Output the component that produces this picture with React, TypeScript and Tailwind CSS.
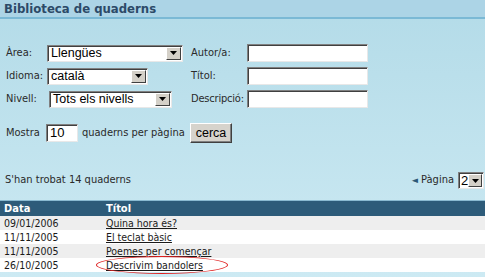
import React from 'react';

const font = { fontFamily: '"DejaVu Sans Condensed", "DejaVu Sans", Verdana, sans-serif' };

function Arrow() {
  return (
    <div className="w-[15px] h-full bg-[#d4d0c8] border border-t-[#ffffff] border-l-[#ffffff] border-r-[#404040] border-b-[#404040] flex items-center justify-center">
      <svg width="7" height="4" viewBox="0 0 7 4">
        <path d="M0 0h7L3.5 4z" fill="#000" />
      </svg>
    </div>
  );
}

function Select({ value, w }: { value: string; w: string }) {
  return (
    <div
      className={`${w} h-[17px] bg-white flex items-stretch border border-t-[#808080] border-l-[#808080] border-r-[#e8e8e8] border-b-[#e8e8e8] shadow-[inset_1px_1px_0_#404040] p-[1px] pl-[3px]`}
    >
      <span className="flex-1 text-[12.5px] leading-[13px] text-black font-['Liberation_Sans',Arial,sans-serif]">{value}</span>
      <Arrow />
    </div>
  );
}

function Input({ w, value }: { w: string; value?: string }) {
  return (
    <div className={`${w} h-[18px] bg-white border border-t-[#808080] border-l-[#808080] border-r-[#e8e8e8] border-b-[#e8e8e8] shadow-[inset_1px_1px_0_#404040] pl-[3px] text-[13px] leading-[15px] text-black font-['Liberation_Sans',Arial,sans-serif]`}>
      {value}
    </div>
  );
}

const rows = [
  { date: '09/01/2006', title: 'Quina hora és?' },
  { date: '11/11/2005', title: 'El teclat bàsic' },
  { date: '11/11/2005', title: 'Poemes per començar' },
  { date: '26/10/2005', title: 'Descrivim bandolers' },
];

export default function App() {
  return (
    <div className="w-[485px] h-[277px] overflow-hidden bg-gradient-to-b from-[#b3dbe8] to-[#cdeaf3] text-[11px] text-[#2a2a2a]" style={font}>
      <div className="h-[19px] bg-[#acd4e6] border-b-2 border-[#7bb9d5] pl-[4px] flex items-center">
        <h1 className="text-[13px] font-bold text-[#2c4a68] leading-none">Biblioteca de quaderns</h1>
      </div>

      <div className="pt-[25px] pl-[6px] flex flex-col gap-[5px]">
        <div className="grid grid-cols-[185px_56px_121px] items-center">
          <div className="flex items-center">
            <span className="w-[41px]">Àrea:</span>
            <Select value="Llengües" w="w-[136px]" />
          </div>
          <span>Autor/a:</span>
          <Input w="w-[121px]" />
        </div>
        <div className="grid grid-cols-[185px_56px_121px] items-center">
          <div className="flex items-center">
            <span className="w-[41px]">Idioma:</span>
            <Select value="català" w="w-[101px]" />
          </div>
          <span>Títol:</span>
          <Input w="w-[121px]" />
        </div>
        <div className="grid grid-cols-[185px_56px_121px] items-center">
          <div className="flex items-center">
            <span className="w-[43px]">Nivell:</span>
            <Select value="Tots els nivells" w="w-[123px]" />
          </div>
          <span className="tracking-[-0.2px]">Descripció:</span>
          <Input w="w-[121px]" />
        </div>

        <div className="flex items-center mt-[10px]">
          <span className="w-[40px]">Mostra</span>
          <Input w="w-[32px]" value="10" />
          <span className="ml-[4px] w-[108px]">quaderns per pàgina</span>
          <button className="w-[42px] h-[20px] bg-[#d6d3cc] border border-t-[#ffffff] border-l-[#ffffff] border-r-[#404040] border-b-[#404040] shadow-[inset_-1px_-1px_0_#808080] text-[12.5px] text-black font-['Liberation_Sans',Arial,sans-serif] leading-none">
            cerca
          </button>
        </div>
      </div>

      <div className="mt-[29px] flex items-center justify-between pl-[5px] pr-[1px]">
        <span>S'han trobat 14 quaderns</span>
        <div className="flex items-center gap-[3px]">
          <span className="text-[#2b5876] text-[9px]">◄</span>
          <span>Pàgina</span>
          <div className="w-[26px] h-[17px] bg-white flex items-stretch border border-t-[#808080] border-l-[#808080] border-r-[#e8e8e8] border-b-[#e8e8e8] shadow-[inset_1px_1px_0_#404040] p-[1px] pl-[2px] ml-[1px]">
            <span className="flex-1 text-[13px] leading-[14px] text-black font-['Liberation_Sans',Arial,sans-serif]">2</span>
            <Arrow />
          </div>
        </div>
      </div>

      <table className="mt-[11px] w-full border-collapse border-t border-[#89b9d0] text-[10.5px]">
        <thead>
          <tr className="bg-[#2d5b79] text-white">
            <th className="text-left font-bold pl-[4px] w-[106px] h-[15px] p-0 leading-[15px] text-[11px]">Data</th>
            <th className="text-left font-bold h-[15px] p-0 leading-[15px] text-[11px]">Títol</th>
          </tr>
        </thead>
        <tbody>
          {rows.map((r, i) => (
            <tr key={i} className={i % 2 === 0 ? 'bg-[#eeeeee]' : 'bg-white'}>
              <td className="pl-[4px] h-[14px] p-0 leading-[14px] text-[#1a1a1a]">{r.date}</td>
              <td className="h-[14px] p-0 leading-[14px] text-[#1a1a1a]">
                <span className="relative underline">
                  {r.title}
                  {i === 3 && (
                    <span className="absolute left-[-10px] right-[-25px] top-[-3px] bottom-[-3px] rounded-[50%] border-[1.5px] border-[#e02020]" />
                  )}
                </span>
              </td>
            </tr>
          ))}
        </tbody>
      </table>
    </div>
  );
}
